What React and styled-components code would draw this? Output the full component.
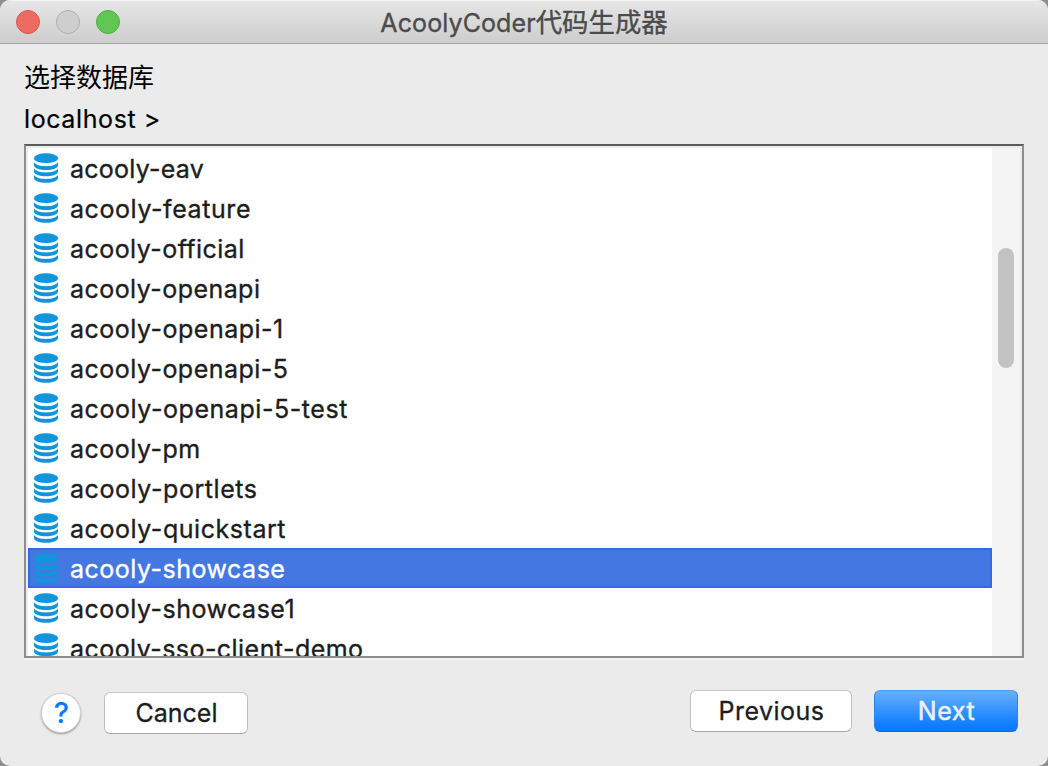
import React from "react";
import styled, { createGlobalStyle } from "styled-components";

const GlobalStyle = createGlobalStyle`
  * { box-sizing: border-box; }
  body { margin: 0; background: #8e8e90; overflow: hidden; }
`;

const Window = styled.div`
  width: 1048px;
  height: 766px;
  display: flex;
  flex-direction: column;
  overflow: hidden;
  background: #ebebeb;
  border-radius: 10px;
  font-family: Inter, "Noto Sans CJK SC", sans-serif;
  font-size: 25px;
  color: #000;
`;

const TitleBar = styled.header`
  flex: none;
  height: 44px;
  display: grid;
  grid-template-columns: 200px 1fr 200px;
  align-items: center;
  padding-left: 16px;
  padding-right: 16px;
  background: linear-gradient(#e6e6e6, #cdcdcd);
  border-top: 1px solid #f3f3f3;
  border-bottom: 1px solid #a5a5a5;
`;

const Lights = styled.div`
  display: flex;
  gap: 16px;
  margin-top: -1px;
`;

const Light = styled.span`
  width: 24px;
  height: 24px;
  border-radius: 50%;
  background: ${(p) => p.$fill};
  border: 1px solid ${(p) => p.$edge};
`;

const Title = styled.h1`
  margin: 0;
  text-align: center;
  font-size: 25px;
  font-weight: 400;
  line-height: 42px;
  white-space: nowrap;
  color: #4b4b4b;
  letter-spacing: 0.1px;
  -webkit-text-stroke: 0.35px currentColor;
  span { font-size: 26.4px; letter-spacing: 0; }
`;

const Content = styled.main`
  padding: 12px 24px 0;
`;

const Heading = styled.div`
  height: 42px;
  line-height: 43px;
  font-size: 26px;
  white-space: nowrap;
`;

const Path = styled.div`
  height: 42px;
  line-height: 42px;
  letter-spacing: 0.6px;
  -webkit-text-stroke: 0.2px currentColor;
  margin-bottom: 4px;
`;

const ListFrame = styled.div`
  height: 514px;
  display: flex;
  overflow: hidden;
  background: #fff;
  border: 2px solid #8e8e8e;
  border-top-color: #5c5c5c;
  box-shadow: 0 2px 0 #f4f4f4;
`;

const ListInset = styled.div`
  flex: 1;
  display: flex;
  border: 2px solid #ececec;
  border-bottom: 0;
  overflow: hidden;
`;

const List = styled.ul`
  flex: 1;
  margin: 0;
  padding: 0;
  list-style: none;
`;

const Row = styled.li`
  height: 40px;
  display: flex;
  align-items: center;
  gap: 12px;
  padding-left: 4px;
  line-height: 36px;
  white-space: nowrap;
  border: 2px solid ${(p) => (p.$selected ? "#3468e4" : "transparent")};
  background: ${(p) => (p.$selected ? "#4477e2" : "transparent")};
  color: ${(p) => (p.$selected ? "#fff" : "#1d1d1d")};
`;

const Name = styled.span`
  padding-top: 2px;
  letter-spacing: ${(p) => p.$track}px;
  -webkit-text-stroke: 0.35px currentColor;
`;

const Track = styled.div`
  width: 28px;
  padding: 100px 6px 0;
  background: #f4f4f4;
`;

const Thumb = styled.div`
  height: 120px;
  border-radius: 8px;
  background: #c3c3c3;
`;

const Footer = styled.footer`
  display: flex;
  align-items: flex-start;
  padding: 32px 30px 0 41px;
`;

const Help = styled.button`
  width: 40px;
  height: 40px;
  margin: 3px 23px 0 0;
  padding: 0 0 0 1px;
  border: 1px solid #d2d2d2;
  border-radius: 50%;
  background: #fff;
  box-shadow: 0 1px 2px rgba(0, 0, 0, 0.35);
  color: #067aff;
  font: 500 29px/38px Inter, sans-serif;
`;

const Button = styled.button`
  width: ${(p) => p.$width}px;
  height: 42px;
  margin-top: ${(p) => p.$drop || 0}px;
  margin-left: ${(p) => p.$before || 0};
  padding: 0 0 0 1px;
  border: 1px solid;
  border-color: ${(p) => (p.$primary ? "#4b9cf5 #2583f4 #0469f3" : "#c6c6c6 #c0c0c0 #a9a9a9")};
  border-radius: 6px;
  background: ${(p) => (p.$primary ? "linear-gradient(#67b0fb, #0c7cff 88%)" : "#fff")};
  color: ${(p) => (p.$primary ? "#efeff4" : "#1d1d1d")};
  font: 400 25px/40px Inter, sans-serif;
  letter-spacing: ${(p) => p.$track || 0}px;
  -webkit-text-stroke: ${(p) => (p.$primary ? 0.5 : 0.3)}px currentColor;
`;

const DbIcon = styled.svg`
  flex: none;
  width: 24px;
  height: 30px;
  margin-bottom: 1px;
  fill: #1296db;
`;

function Database() {
  return (
    <DbIcon viewBox="0 0 24 30" aria-hidden="true">
      <ellipse cx="12" cy="5.2" rx="12" ry="4.9" />
      <path d="M0 9.3C2 12 6.5 13.2 12 13.2S22 12 24 9.3V12.5C24 15.2 18.7 17 12 17S0 15.2 0 12.5Z" />
      <path d="M0 15.6C2 18.3 6.5 19.5 12 19.5S22 18.3 24 15.6V18.7C24 21.4 18.7 23.2 12 23.2S0 21.4 0 18.7Z" />
      <path d="M0 22.1C2 24.8 6.5 26 12 26S22 24.8 24 22.1V25.3C24 28 18.7 29.8 12 29.8S0 28 0 25.3Z" />
    </DbIcon>
  );
}

const databases = [
  ["acooly-eav", 0.25],
  ["acooly-feature", 0.58],
  ["acooly-official", 0.45],
  ["acooly-openapi", 0.45],
  ["acooly-openapi-1", 0.5],
  ["acooly-openapi-5", 0.48],
  ["acooly-openapi-5-test", 0.56],
  ["acooly-pm", 0.5],
  ["acooly-portlets", 0.57],
  ["acooly-quickstart", 0.55],
  ["acooly-showcase", 0.5],
  ["acooly-showcase1", 0.5],
  ["acooly-sso-client-demo", 0.45],
];

export default function App() {
  return (
    <Window>
      <GlobalStyle />
      <TitleBar>
        <Lights>
          <Light $fill="#ed6b60" $edge="#d8584f" />
          <Light $fill="#cfcfcf" $edge="#b0b0b0" />
          <Light $fill="#62c655" $edge="#4fae40" />
        </Lights>
        <Title>
          AcoolyCoder<span>代码生成器</span>
        </Title>
      </TitleBar>
      <Content>
        <Heading>选择数据库</Heading>
        <Path>localhost &gt;</Path>
        <ListFrame>
          <ListInset>
            <List>
              {databases.map(([name, track]) => (
                <Row key={name} $selected={name === "acooly-showcase"}>
                  <Database />
                  <Name $track={track}>{name}</Name>
                </Row>
              ))}
            </List>
            <Track>
              <Thumb />
            </Track>
          </ListInset>
        </ListFrame>
      </Content>
      <Footer>
        <Help>?</Help>
        <Button $width={144} $drop={2}>Cancel</Button>
        <Button $width={162} $before="auto" $track={0.5}>Previous</Button>
        <Button $width={144} $before="22px" $track={0.6} $primary>Next</Button>
      </Footer>
    </Window>
  );
}
